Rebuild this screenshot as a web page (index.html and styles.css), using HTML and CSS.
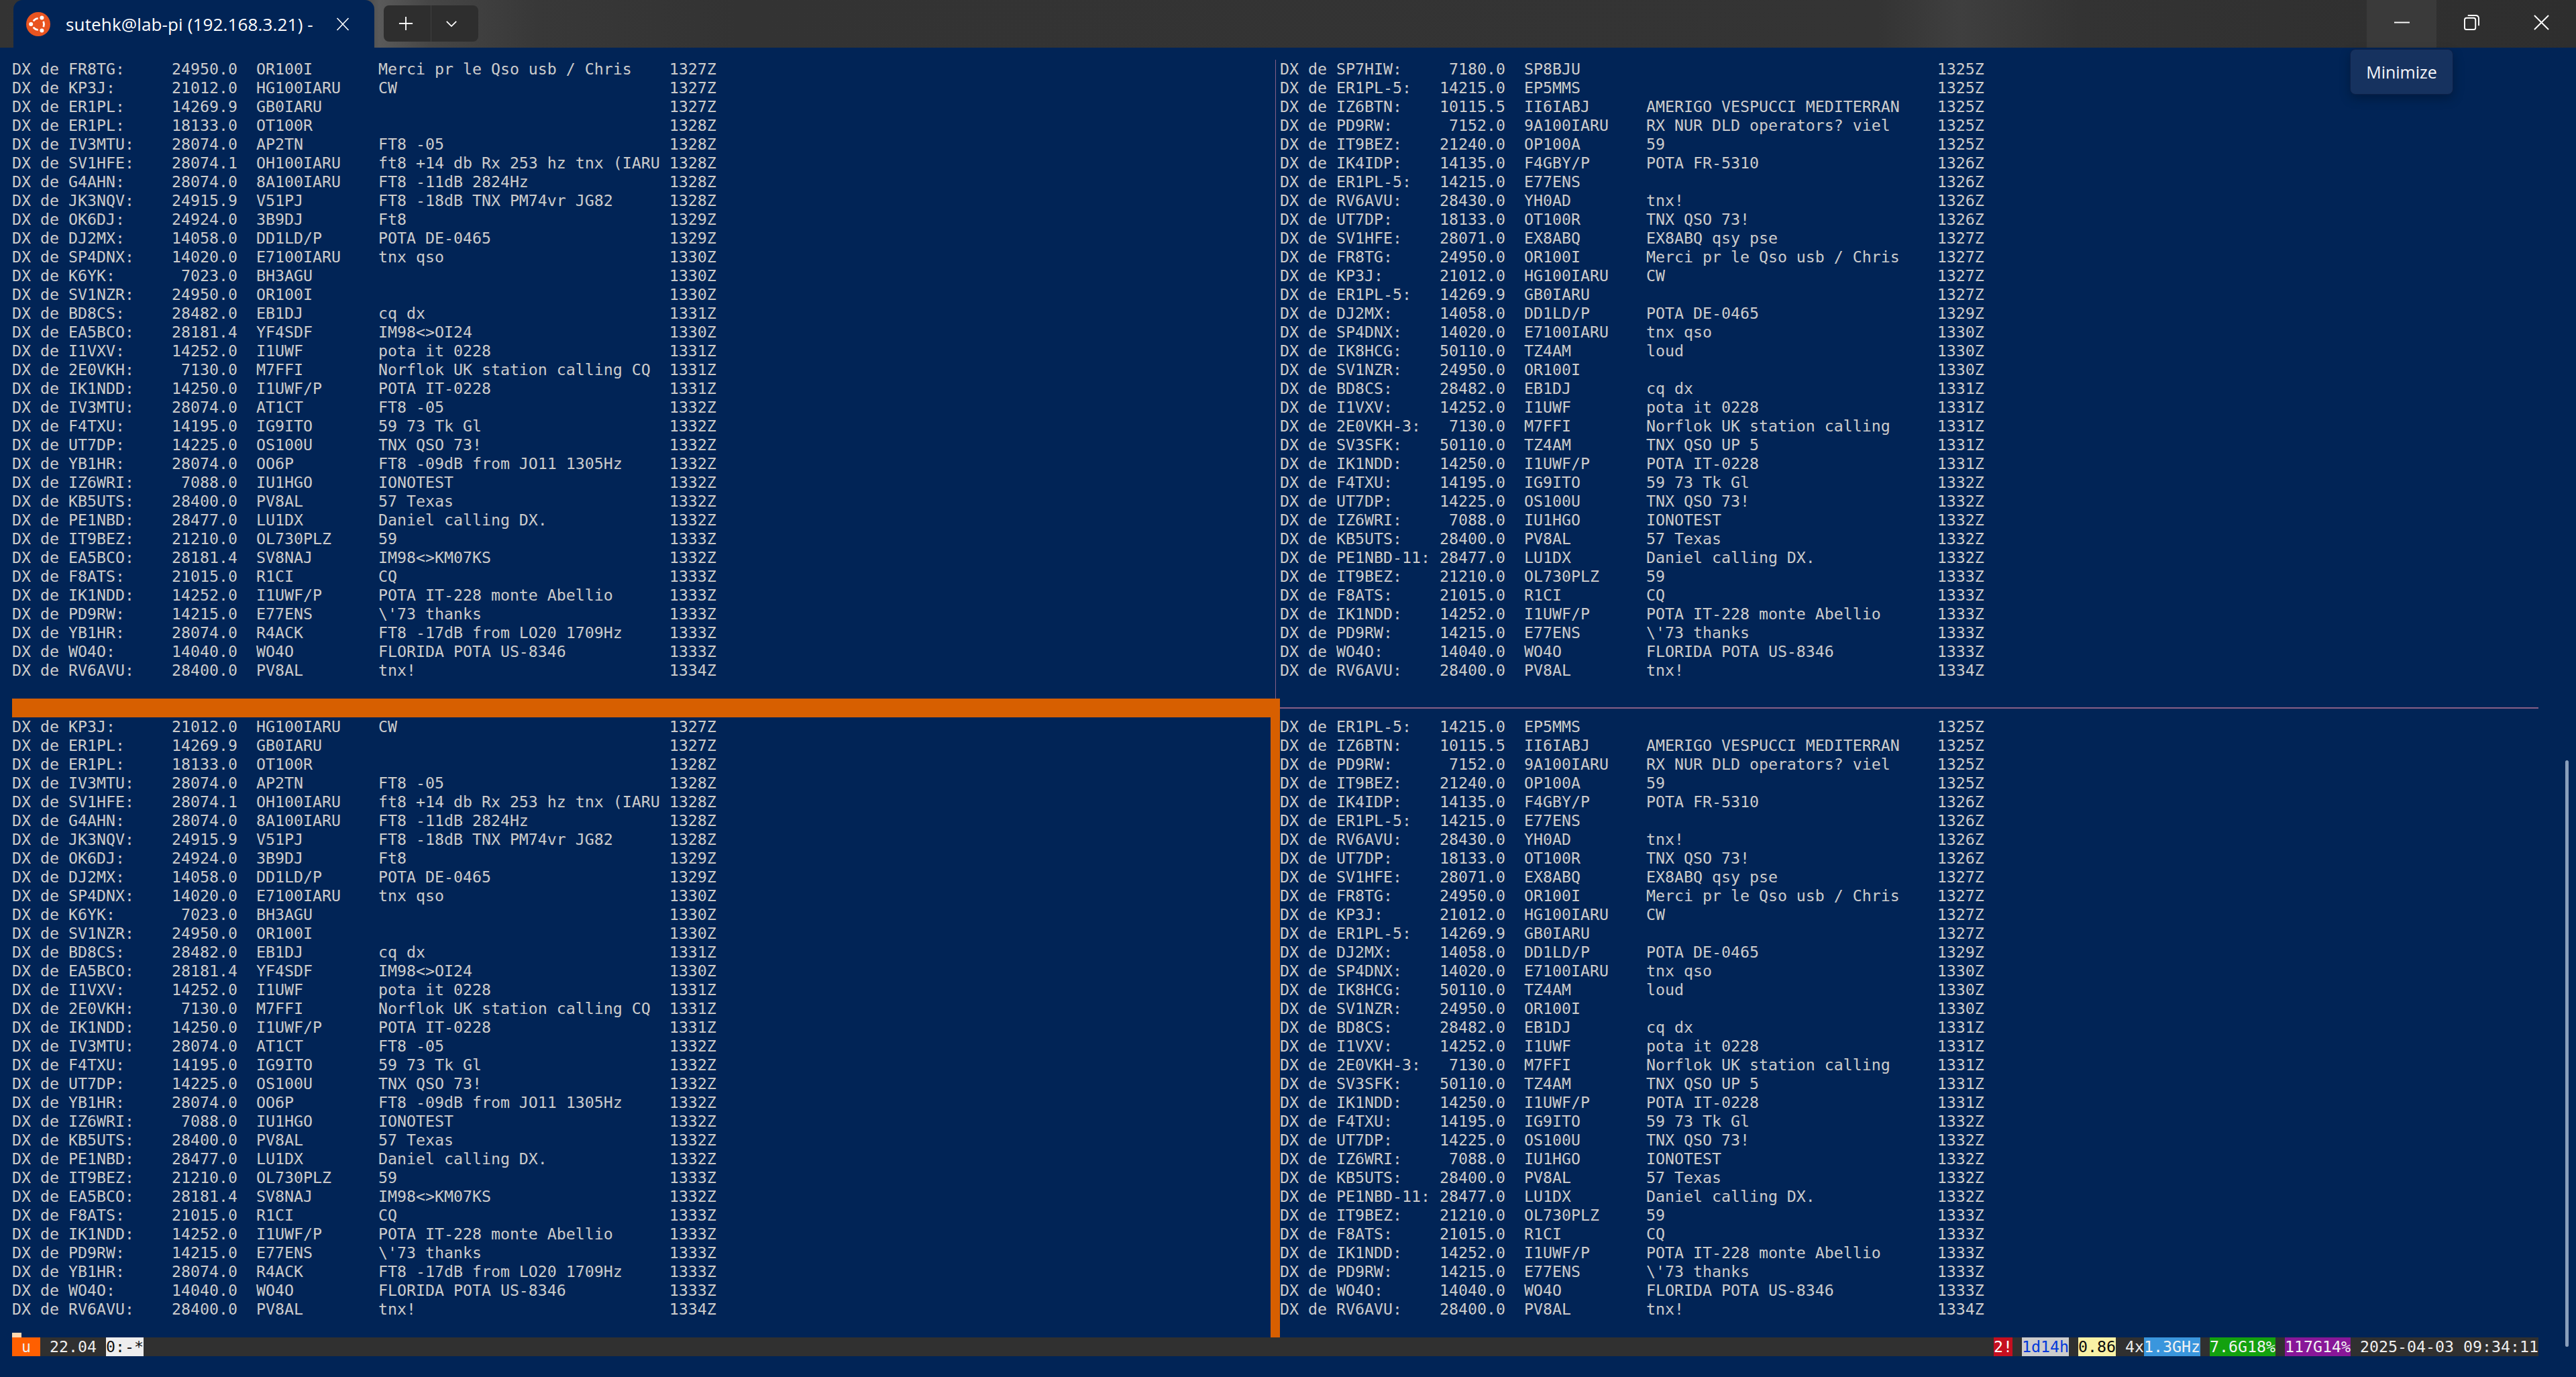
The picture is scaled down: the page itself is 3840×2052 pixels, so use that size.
FILE: index.html
```html
<!DOCTYPE html>
<html lang="en">
<head>
<meta charset="utf-8">
<title>sutehk@lab-pi (192.168.3.21)</title>
<link rel="stylesheet" href="styles.css">
</head>
<body>
<header class="titlebar">
  <div class="tab">
    <svg class="ubuntu" viewBox="0 0 36 36" aria-hidden="true">
      <circle cx="18" cy="18" r="18" fill="#e95420"/>
      <circle cx="18" cy="18" r="8.6" fill="none" stroke="#fff" stroke-width="2.8"/>
      <path d="M18 18 L6 25.5 L6 10.5Z" fill="#e95420" transform="rotate(0 18 18)"/>
      <path d="M18 18 L6 25.5 L6 10.5Z" fill="#e95420" transform="rotate(120 18 18)"/>
      <path d="M18 18 L6 25.5 L6 10.5Z" fill="#e95420" transform="rotate(240 18 18)"/>
      <circle cx="7.2" cy="18" r="3" fill="#fff"/>
      <circle cx="23.4" cy="8.6" r="3" fill="#fff"/>
      <circle cx="23.4" cy="27.4" r="3" fill="#fff"/>
    </svg>
    <span class="tab-title">sutehk@lab-pi (192.168.3.21) -</span>
    <svg class="tab-close" viewBox="0 0 20 20" aria-hidden="true"><path d="M1.5 1 L18.5 19 M18.5 1 L1.5 19" stroke="#fff" stroke-width="1.6" fill="none"/></svg>
  </div>
  <div class="tab-actions">
    <button class="action action-new"><svg viewBox="0 0 24 24" aria-hidden="true"><path d="M12 1 V23 M1 12 H23" stroke="#fff" stroke-width="2" fill="none"/></svg></button>
    <button class="action action-menu"><svg viewBox="0 0 20 12" aria-hidden="true"><path d="M2 2 L10 10 L18 2" stroke="#fff" stroke-width="2" fill="none"/></svg></button>
  </div>
  <div class="window-controls">
    <div class="control control-hover"><svg viewBox="0 0 24 24" aria-hidden="true"><path d="M0 12 H24" stroke="#fff" stroke-width="2" fill="none"/></svg></div>
    <div class="control"><svg viewBox="0 0 24 24" aria-hidden="true"><rect x="1" y="5" width="17" height="18" rx="3" stroke="#fff" stroke-width="2" fill="none"/><path d="M6 1 H18 Q23 1 23 6 V17" stroke="#fff" stroke-width="2" fill="none"/></svg></div>
    <div class="control"><svg viewBox="0 0 24 24" aria-hidden="true"><path d="M1 1 L23 23 M23 1 L1 23" stroke="#fff" stroke-width="2" fill="none"/></svg></div>
    <div class="tooltip">Minimize</div>
  </div>
</header>

<main class="terminal">
  <div class="panes">
<pre class="pane">DX de FR8TG:     24950.0  OR100I       Merci pr le Qso usb / Chris    1327Z
DX de KP3J:      21012.0  HG100IARU    CW                             1327Z
DX de ER1PL:     14269.9  GB0IARU                                     1327Z
DX de ER1PL:     18133.0  OT100R                                      1328Z
DX de IV3MTU:    28074.0  AP2TN        FT8 -05                        1328Z
DX de SV1HFE:    28074.1  OH100IARU    ft8 +14 db Rx 253 hz tnx (IARU 1328Z
DX de G4AHN:     28074.0  8A100IARU    FT8 -11dB 2824Hz               1328Z
DX de JK3NQV:    24915.9  V51PJ        FT8 -18dB TNX PM74vr JG82      1328Z
DX de OK6DJ:     24924.0  3B9DJ        Ft8                            1329Z
DX de DJ2MX:     14058.0  DD1LD/P      POTA DE-0465                   1329Z
DX de SP4DNX:    14020.0  E7100IARU    tnx qso                        1330Z
DX de K6YK:       7023.0  BH3AGU                                      1330Z
DX de SV1NZR:    24950.0  OR100I                                      1330Z
DX de BD8CS:     28482.0  EB1DJ        cq dx                          1331Z
DX de EA5BCO:    28181.4  YF4SDF       IM98&lt;&gt;OI24                     1330Z
DX de I1VXV:     14252.0  I1UWF        pota it 0228                   1331Z
DX de 2E0VKH:     7130.0  M7FFI        Norflok UK station calling CQ  1331Z
DX de IK1NDD:    14250.0  I1UWF/P      POTA IT-0228                   1331Z
DX de IV3MTU:    28074.0  AT1CT        FT8 -05                        1332Z
DX de F4TXU:     14195.0  IG9ITO       59 73 Tk Gl                    1332Z
DX de UT7DP:     14225.0  OS100U       TNX QSO 73!                    1332Z
DX de YB1HR:     28074.0  OO6P         FT8 -09dB from JO11 1305Hz     1332Z
DX de IZ6WRI:     7088.0  IU1HGO       IONOTEST                       1332Z
DX de KB5UTS:    28400.0  PV8AL        57 Texas                       1332Z
DX de PE1NBD:    28477.0  LU1DX        Daniel calling DX.             1332Z
DX de IT9BEZ:    21210.0  OL730PLZ     59                             1333Z
DX de EA5BCO:    28181.4  SV8NAJ       IM98&lt;&gt;KM07KS                   1332Z
DX de F8ATS:     21015.0  R1CI         CQ                             1333Z
DX de IK1NDD:    14252.0  I1UWF/P      POTA IT-228 monte Abellio      1333Z
DX de PD9RW:     14215.0  E77ENS       \'73 thanks                    1333Z
DX de YB1HR:     28074.0  R4ACK        FT8 -17dB from LO20 1709Hz     1333Z
DX de WO4O:      14040.0  WO4O         FLORIDA POTA US-8346           1333Z
DX de RV6AVU:    28400.0  PV8AL        tnx!                           1334Z</pre>
    <div class="divider-v"></div>
<pre class="pane">DX de SP7HIW:     7180.0  SP8BJU                                      1325Z
DX de ER1PL-5:   14215.0  EP5MMS                                      1325Z
DX de IZ6BTN:    10115.5  II6IABJ      AMERIGO VESPUCCI MEDITERRAN    1325Z
DX de PD9RW:      7152.0  9A100IARU    RX NUR DLD operators? viel     1325Z
DX de IT9BEZ:    21240.0  OP100A       59                             1325Z
DX de IK4IDP:    14135.0  F4GBY/P      POTA FR-5310                   1326Z
DX de ER1PL-5:   14215.0  E77ENS                                      1326Z
DX de RV6AVU:    28430.0  YH0AD        tnx!                           1326Z
DX de UT7DP:     18133.0  OT100R       TNX QSO 73!                    1326Z
DX de SV1HFE:    28071.0  EX8ABQ       EX8ABQ qsy pse                 1327Z
DX de FR8TG:     24950.0  OR100I       Merci pr le Qso usb / Chris    1327Z
DX de KP3J:      21012.0  HG100IARU    CW                             1327Z
DX de ER1PL-5:   14269.9  GB0IARU                                     1327Z
DX de DJ2MX:     14058.0  DD1LD/P      POTA DE-0465                   1329Z
DX de SP4DNX:    14020.0  E7100IARU    tnx qso                        1330Z
DX de IK8HCG:    50110.0  TZ4AM        loud                           1330Z
DX de SV1NZR:    24950.0  OR100I                                      1330Z
DX de BD8CS:     28482.0  EB1DJ        cq dx                          1331Z
DX de I1VXV:     14252.0  I1UWF        pota it 0228                   1331Z
DX de 2E0VKH-3:   7130.0  M7FFI        Norflok UK station calling     1331Z
DX de SV3SFK:    50110.0  TZ4AM        TNX QSO UP 5                   1331Z
DX de IK1NDD:    14250.0  I1UWF/P      POTA IT-0228                   1331Z
DX de F4TXU:     14195.0  IG9ITO       59 73 Tk Gl                    1332Z
DX de UT7DP:     14225.0  OS100U       TNX QSO 73!                    1332Z
DX de IZ6WRI:     7088.0  IU1HGO       IONOTEST                       1332Z
DX de KB5UTS:    28400.0  PV8AL        57 Texas                       1332Z
DX de PE1NBD-11: 28477.0  LU1DX        Daniel calling DX.             1332Z
DX de IT9BEZ:    21210.0  OL730PLZ     59                             1333Z
DX de F8ATS:     21015.0  R1CI         CQ                             1333Z
DX de IK1NDD:    14252.0  I1UWF/P      POTA IT-228 monte Abellio      1333Z
DX de PD9RW:     14215.0  E77ENS       \'73 thanks                    1333Z
DX de WO4O:      14040.0  WO4O         FLORIDA POTA US-8346           1333Z
DX de RV6AVU:    28400.0  PV8AL        tnx!                           1334Z</pre>
    <div class="sep-active"></div>
    <div class="sep-idle"></div>
    <div class="pane-active">
<pre class="pane">DX de KP3J:      21012.0  HG100IARU    CW                             1327Z
DX de ER1PL:     14269.9  GB0IARU                                     1327Z
DX de ER1PL:     18133.0  OT100R                                      1328Z
DX de IV3MTU:    28074.0  AP2TN        FT8 -05                        1328Z
DX de SV1HFE:    28074.1  OH100IARU    ft8 +14 db Rx 253 hz tnx (IARU 1328Z
DX de G4AHN:     28074.0  8A100IARU    FT8 -11dB 2824Hz               1328Z
DX de JK3NQV:    24915.9  V51PJ        FT8 -18dB TNX PM74vr JG82      1328Z
DX de OK6DJ:     24924.0  3B9DJ        Ft8                            1329Z
DX de DJ2MX:     14058.0  DD1LD/P      POTA DE-0465                   1329Z
DX de SP4DNX:    14020.0  E7100IARU    tnx qso                        1330Z
DX de K6YK:       7023.0  BH3AGU                                      1330Z
DX de SV1NZR:    24950.0  OR100I                                      1330Z
DX de BD8CS:     28482.0  EB1DJ        cq dx                          1331Z
DX de EA5BCO:    28181.4  YF4SDF       IM98&lt;&gt;OI24                     1330Z
DX de I1VXV:     14252.0  I1UWF        pota it 0228                   1331Z
DX de 2E0VKH:     7130.0  M7FFI        Norflok UK station calling CQ  1331Z
DX de IK1NDD:    14250.0  I1UWF/P      POTA IT-0228                   1331Z
DX de IV3MTU:    28074.0  AT1CT        FT8 -05                        1332Z
DX de F4TXU:     14195.0  IG9ITO       59 73 Tk Gl                    1332Z
DX de UT7DP:     14225.0  OS100U       TNX QSO 73!                    1332Z
DX de YB1HR:     28074.0  OO6P         FT8 -09dB from JO11 1305Hz     1332Z
DX de IZ6WRI:     7088.0  IU1HGO       IONOTEST                       1332Z
DX de KB5UTS:    28400.0  PV8AL        57 Texas                       1332Z
DX de PE1NBD:    28477.0  LU1DX        Daniel calling DX.             1332Z
DX de IT9BEZ:    21210.0  OL730PLZ     59                             1333Z
DX de EA5BCO:    28181.4  SV8NAJ       IM98&lt;&gt;KM07KS                   1332Z
DX de F8ATS:     21015.0  R1CI         CQ                             1333Z
DX de IK1NDD:    14252.0  I1UWF/P      POTA IT-228 monte Abellio      1333Z
DX de PD9RW:     14215.0  E77ENS       \'73 thanks                    1333Z
DX de YB1HR:     28074.0  R4ACK        FT8 -17dB from LO20 1709Hz     1333Z
DX de WO4O:      14040.0  WO4O         FLORIDA POTA US-8346           1333Z
DX de RV6AVU:    28400.0  PV8AL        tnx!                           1334Z</pre>
      <div class="cursor"></div>
    </div>
    <div class="border-active"></div>
<pre class="pane">DX de ER1PL-5:   14215.0  EP5MMS                                      1325Z
DX de IZ6BTN:    10115.5  II6IABJ      AMERIGO VESPUCCI MEDITERRAN    1325Z
DX de PD9RW:      7152.0  9A100IARU    RX NUR DLD operators? viel     1325Z
DX de IT9BEZ:    21240.0  OP100A       59                             1325Z
DX de IK4IDP:    14135.0  F4GBY/P      POTA FR-5310                   1326Z
DX de ER1PL-5:   14215.0  E77ENS                                      1326Z
DX de RV6AVU:    28430.0  YH0AD        tnx!                           1326Z
DX de UT7DP:     18133.0  OT100R       TNX QSO 73!                    1326Z
DX de SV1HFE:    28071.0  EX8ABQ       EX8ABQ qsy pse                 1327Z
DX de FR8TG:     24950.0  OR100I       Merci pr le Qso usb / Chris    1327Z
DX de KP3J:      21012.0  HG100IARU    CW                             1327Z
DX de ER1PL-5:   14269.9  GB0IARU                                     1327Z
DX de DJ2MX:     14058.0  DD1LD/P      POTA DE-0465                   1329Z
DX de SP4DNX:    14020.0  E7100IARU    tnx qso                        1330Z
DX de IK8HCG:    50110.0  TZ4AM        loud                           1330Z
DX de SV1NZR:    24950.0  OR100I                                      1330Z
DX de BD8CS:     28482.0  EB1DJ        cq dx                          1331Z
DX de I1VXV:     14252.0  I1UWF        pota it 0228                   1331Z
DX de 2E0VKH-3:   7130.0  M7FFI        Norflok UK station calling     1331Z
DX de SV3SFK:    50110.0  TZ4AM        TNX QSO UP 5                   1331Z
DX de IK1NDD:    14250.0  I1UWF/P      POTA IT-0228                   1331Z
DX de F4TXU:     14195.0  IG9ITO       59 73 Tk Gl                    1332Z
DX de UT7DP:     14225.0  OS100U       TNX QSO 73!                    1332Z
DX de IZ6WRI:     7088.0  IU1HGO       IONOTEST                       1332Z
DX de KB5UTS:    28400.0  PV8AL        57 Texas                       1332Z
DX de PE1NBD-11: 28477.0  LU1DX        Daniel calling DX.             1332Z
DX de IT9BEZ:    21210.0  OL730PLZ     59                             1333Z
DX de F8ATS:     21015.0  R1CI         CQ                             1333Z
DX de IK1NDD:    14252.0  I1UWF/P      POTA IT-228 monte Abellio      1333Z
DX de PD9RW:     14215.0  E77ENS       \'73 thanks                    1333Z
DX de WO4O:      14040.0  WO4O         FLORIDA POTA US-8346           1333Z
DX de RV6AVU:    28400.0  PV8AL        tnx!                           1334Z</pre>
  </div>
  <footer class="status">
    <div class="status-left"><span class="s-session"> u </span><span> 22.04 </span><span class="s-window">0:-*</span></div>
    <div class="status-right"><span class="s-alert">2!</span><span> </span><span class="s-uptime">1d14h</span><span> </span><span class="s-load">0.86</span><span> 4x</span><span class="s-cpu">1.3GHz</span><span> </span><span class="s-mem">7.6G18%</span><span> </span><span class="s-disk">117G14%</span><span> 2025-04-03 09:34:11</span></div>
  </footer>
  <div class="scrollbar"></div>
</main>
</body>
</html>
```
FILE: styles.css
```css
* { box-sizing: border-box; }

html, body {
  margin: 0;
  height: 100%;
  background: #012456;
}

body {
  width: 3840px;
  height: 2052px;
  overflow: hidden;
  display: flex;
  flex-direction: column;
  position: relative;
}

/* ---------- title bar ---------- */
.titlebar {
  flex: 0 0 71px;
  display: flex;
  align-items: flex-start;
  padding-left: 20px;
  background: linear-gradient(90deg, #333 0, #363636 520px, #5a5a5a 565px, #464646 640px, #383838 800px, #333 1100px, #343434 2800px, #3f3f3f 2920px, #333 3100px, #2e2e2e 3840px);
}

.tab {
  position: relative;
  flex: 0 0 538px;
  height: 71px;
  display: flex;
  align-items: center;
  padding-left: 19px;
  background: #012456;
  border-radius: 14px 14px 0 0;
}

.ubuntu {
  width: 36px;
  height: 36px;
  flex: none;
}

.tab-title {
  margin-left: 23px;
  font: 500 26px/36px "Open Sans", "Noto Sans", sans-serif;
  letter-spacing: 0.15px;
  color: #fff;
  white-space: pre;
  flex: 0 0 370px;
}

.tab-close {
  width: 20px;
  height: 20px;
  margin-left: 33px;
  flex: none;
}

.tab-actions {
  display: flex;
  margin: 8px 0 0 14px;
  height: 54px;
  background: #2e2e2e;
  border-radius: 8px;
  overflow: hidden;
}

.action {
  display: flex;
  align-items: center;
  justify-content: center;
  padding: 0;
  border: 0;
  background: transparent;
  height: 54px;
}

.action-new {
  width: 71px;
  padding-right: 4px;
  border-right: 1px solid #3f3f3f;
}

.action-new svg { width: 22px; height: 22px; }

.action-menu {
  width: 70px;
  padding-right: 10px;
}

.action-menu svg { width: 18px; height: 11px; }

.window-controls {
  position: relative;
  margin-left: auto;
  display: flex;
}

.control {
  width: 104px;
  height: 71px;
  display: flex;
  align-items: center;
  justify-content: center;
  padding-bottom: 4px;
}

.control svg { width: 23px; height: 23px; }

.control-hover { background: #3a3a3a; }

.tooltip {
  position: absolute;
  top: 73px;
  left: -25px;
  width: 154px;
  height: 68px;
  display: flex;
  align-items: center;
  justify-content: center;
  background: #16325f;
  border: 1px solid #0c2048;
  border-radius: 8px;
  box-shadow: 0 6px 16px rgba(0, 0, 0, 0.25);
  font: 400 25px/1 "Open Sans", "Noto Sans", sans-serif;
  color: #f4f6fa;
  z-index: 2;
}

/* ---------- terminal ---------- */
.terminal {
  flex: 1;
  padding: 18px 0 0 18px;
  color: #ccc;
  font-family: "DejaVu Sans Mono", monospace;
  font-size: 23.25px;
  line-height: 28px;
  font-kerning: none;
  font-variant-ligatures: none;
}

.panes {
  display: grid;
  grid-template-columns: 1876px 14px 1876px;
  grid-template-rows: 952px 28px 924px;
}

.pane {
  margin: 0;
  font: inherit;
  white-space: pre;
}

.divider-v {
  width: 1px;
  margin-left: 7px;
  background: #875f87;
}

.sep-active {
  grid-column: 1 / span 2;
  background: #d75f00;
}

.sep-idle {
  align-self: center;
  height: 2px;
  background: #875f87;
}

.pane-active {
  display: flex;
  flex-direction: column;
  justify-content: space-between;
}

.cursor {
  width: 14px;
  height: 7px;
  background: #ffd7af;
}

.border-active { background: #d75f00; }

/* ---------- tmux status line ---------- */
.status {
  width: 3766px;
  height: 28px;
  display: flex;
  justify-content: space-between;
  background: #303030;
  color: #eee;
  white-space: pre;
}

.status-left, .status-right { display: flex; }

.s-session { background: #ff5f00; color: #eee; }
.s-window { background: #eee; color: #111; }
.s-alert { background: #c50f1f; color: #fff; }
.s-uptime { background: #ccc; color: #0037da; }
.s-load { background: #f9f1a5; color: #0c0c0c; }
.s-cpu { background: #3a96dd; color: #f2f2f2; }
.s-mem { background: #13a10e; color: #f2f2f2; }
.s-disk { background: #881798; color: #f2f2f2; }

.scrollbar {
  position: absolute;
  left: 3824px;
  top: 1133px;
  width: 5px;
  height: 874px;
  border-radius: 3px;
  background: #8a9fbb;
}
```
